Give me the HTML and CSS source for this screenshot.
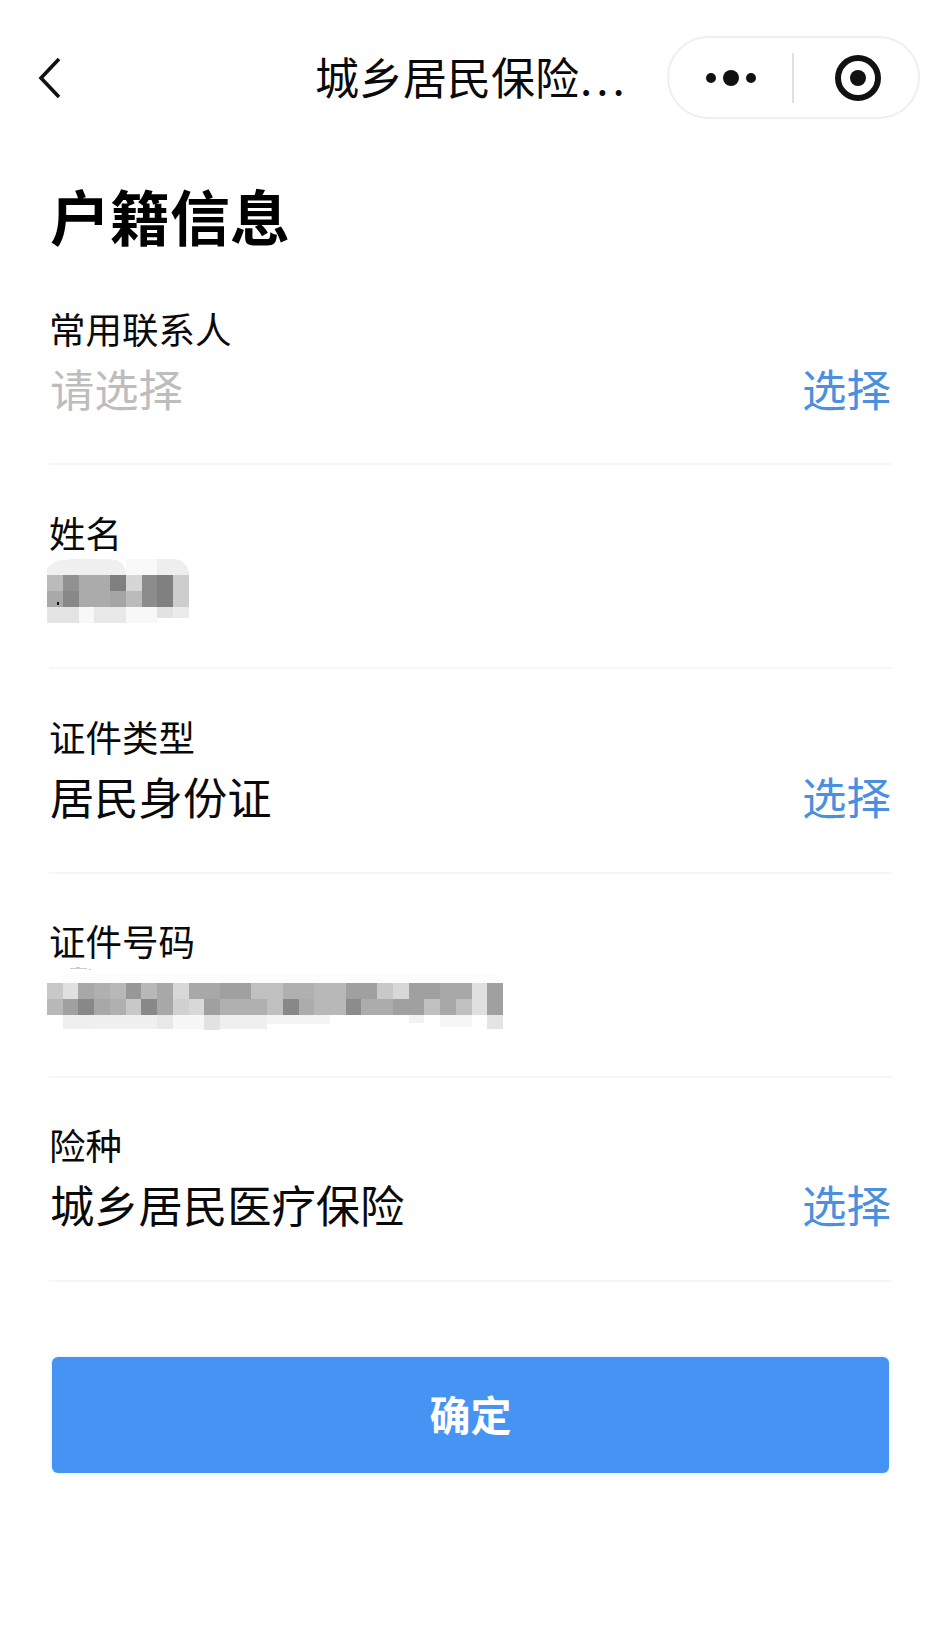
FILE: index.html
```html
<!DOCTYPE html>
<html lang="zh-CN">
<head>
<meta charset="utf-8">
<title>户籍信息</title>
<link rel="stylesheet" href="styles.css">
</head>
<body>
<div class="page">
  <header class="nav">
    <button class="back" aria-label="返回">
      <svg width="26" height="42" viewBox="0 0 26 42"><polyline points="22,2 4,21 22,40" fill="none" stroke="#111" stroke-width="3.6"/></svg>
    </button>
    <div class="nav-title">城乡居民保险<span class="ellipsis">...</span></div>
    <div class="capsule">
      <svg class="cap-dots" width="52" height="20" viewBox="0 0 52 20"><circle cx="6" cy="10" r="5" fill="#111"/><circle cx="26" cy="10" r="8" fill="#111"/><circle cx="46" cy="10" r="5" fill="#111"/></svg>
      <span class="cap-line"></span>
      <svg class="cap-target" width="48" height="48" viewBox="0 0 48 48"><circle cx="24" cy="24" r="20" fill="none" stroke="#111" stroke-width="6"/><circle cx="24" cy="24" r="8" fill="#111"/></svg>
    </div>
  </header>

  <h1 class="heading">户籍信息</h1>

  <section class="field">
    <div class="label">常用联系人</div>
    <div class="row"><span class="value placeholder">请选择</span><a class="pick">选择</a></div>
  </section>

  <section class="field">
    <div class="label">姓名</div>
    <div class="row mosaic-row">
      <svg class="mosaic" width="142" height="64" viewBox="0 0 9 4" shape-rendering="crispEdges">
        <path d="M0 1V.6Q.4 0 1.4 0H4Q5 0 5 1Z" fill="#f0f0f0"/>
        <rect x="5" y="0" width="2" height="1" fill="#f9f9f9"/>
        <path d="M7 0H8.2Q9 .2 9 1H7Z" fill="#eee"/>
        <rect x="0" y="1" width="1" height="1" fill="#bbb"/><rect x="1" y="1" width="1" height="1" fill="#919191"/><rect x="2" y="1" width="2" height="1" fill="#ababab"/><rect x="4" y="1" width="1" height="1" fill="#808080"/><rect x="5" y="1" width="1" height="1" fill="#d6d6d6"/><rect x="6" y="1" width="1" height="1" fill="#8c8c8c"/><rect x="7" y="1" width="1" height="1" fill="#808080"/><rect x="8" y="1" width="1" height="1" fill="#cdcdcd"/>
        <rect x="0" y="2" width="1" height="1" fill="#a9a9a9"/><rect x="1" y="2" width="1" height="1" fill="#888"/><rect x="2" y="2" width="2" height="1" fill="#ababab"/><rect x="4" y="2" width="1" height="1" fill="#a5a5a5"/><rect x="5" y="2" width="1" height="1" fill="#bbb"/><rect x="6" y="2" width="1" height="1" fill="#8c8c8c"/><rect x="7" y="2" width="1" height="1" fill="#808080"/><rect x="8" y="2" width="1" height="1" fill="#cdcdcd"/>
        <rect x="0" y="3" width="2" height="1" fill="#e4e4e4"/><rect x="2" y="3" width="1" height="1" fill="#f8f8f8"/><rect x="3" y="3" width="2" height="1" fill="#e8e8e8"/><rect x="5" y="3" width="2" height="1" fill="#f8f8f8"/><rect x="7" y="3" width="1" height=".7" fill="#e2e2e2"/><rect x="8" y="3" width="1" height=".7" fill="#ebebeb"/>
        <rect x=".62" y="2.72" width=".14" height=".14" fill="#111"/>
      </svg>
    </div>
  </section>

  <section class="field">
    <div class="label">证件类型</div>
    <div class="row"><span class="value">居民身份证</span><a class="pick">选择</a></div>
  </section>

  <section class="field">
    <div class="label">证件号码</div>
    <div class="row mosaic-row">
      <svg class="mosaic mosaic-id" width="456" height="64" viewBox="0 -1 29 4" shape-rendering="crispEdges">
        <rect x="1" y="-.6" width="28" height=".6" fill="#fdfdfd"/>
        <path d="M1.3 -.9Q2 -1.15 2.9 -.85Q2 -.98 1.3 -.9Z" fill="#ccc"/>
        <g class="m-row">
          <rect x="0" y="0" width="1" height="1" fill="#c8c8c8"/><rect x="1" y="0" width="1" height="1" fill="#e0e0e0"/><rect x="2" y="0" width="1" height="1" fill="#a8a8a8"/><rect x="3" y="0" width="1" height="1" fill="#b0b0b0"/><rect x="4" y="0" width="1" height="1" fill="#b8b8b8"/><rect x="5" y="0" width="1" height="1" fill="#989898"/><rect x="6" y="0" width="1" height="1" fill="#b8b8b8"/><rect x="7" y="0" width="1" height="1" fill="#a8a8a8"/><rect x="8" y="0" width="1" height="1" fill="#d8d8d8"/><rect x="9" y="0" width="2" height="1" fill="#a8a8a8"/><rect x="11" y="0" width="2" height="1" fill="#a0a0a0"/><rect x="13" y="0" width="2" height="1" fill="#c0c0c0"/><rect x="15" y="0" width="2" height="1" fill="#b0b0b0"/><rect x="17" y="0" width="2" height="1" fill="#b8b8b8"/><rect x="19" y="0" width="2" height="1" fill="#a0a0a0"/><rect x="21" y="0" width="1" height="1" fill="#c8c8c8"/><rect x="22" y="0" width="1" height="1" fill="#d8d8d8"/><rect x="23" y="0" width="2" height="1" fill="#a0a0a0"/><rect x="25" y="0" width="2" height="1" fill="#a8a8a8"/><rect x="27" y="0" width="1" height="1" fill="#e0e0e0"/><rect x="28" y="0" width="1" height="1" fill="#a0a0a0"/>
        </g>
        <g class="m-row">
          <rect x="0" y="1" width="1" height="1" fill="#b8b8b8"/><rect x="1" y="1" width="1" height="1" fill="#a0a0a0"/><rect x="2" y="1" width="1" height="1" fill="#888"/><rect x="3" y="1" width="1" height="1" fill="#a8a8a8"/><rect x="4" y="1" width="1" height="1" fill="#b0b0b0"/><rect x="5" y="1" width="1" height="1" fill="#c8c8c8"/><rect x="6" y="1" width="1" height="1" fill="#888"/><rect x="7" y="1" width="1" height="1" fill="#a8a8a8"/><rect x="8" y="1" width="1" height="1" fill="#d0d0d0"/><rect x="9" y="1" width="1" height="1" fill="#d8d8d8"/><rect x="10" y="1" width="1" height="1" fill="#a0a0a0"/><rect x="11" y="1" width="3" height="1" fill="#b0b0b0"/><rect x="14" y="1" width="1" height="1" fill="#c0c0c0"/><rect x="15" y="1" width="1" height="1" fill="#888"/><rect x="16" y="1" width="1" height="1" fill="#acacac"/><rect x="17" y="1" width="2" height="1" fill="#b8b8b8"/><rect x="19" y="1" width="1" height="1" fill="#8c8c8c"/><rect x="20" y="1" width="2" height="1" fill="#acacac"/><rect x="22" y="1" width="2" height="1" fill="#a0a0a0"/><rect x="24" y="1" width="1" height="1" fill="#c0c0c0"/><rect x="25" y="1" width="1" height="1" fill="#a8a8a8"/><rect x="26" y="1" width="1" height="1" fill="#c0c0c0"/><rect x="27" y="1" width="1" height="1" fill="#e0e0e0"/><rect x="28" y="1" width="1" height="1" fill="#a0a0a0"/>
        </g>
        <g class="m-row">
          <rect x="1" y="2" width="2" height=".9" fill="#efefef"/><rect x="3" y="2" width="4" height=".9" fill="#f0f0f0"/><rect x="7" y="2" width="1" height=".9" fill="#e8e8e8"/><rect x="8" y="2" width="2" height=".9" fill="#f7f7f7"/><rect x="10" y="2" width="1" height="1" fill="#e2e2e2"/><rect x="11" y="2" width="3" height=".9" fill="#efefef"/><rect x="14" y="2" width="4" height=".6" fill="#f4f4f4"/><rect x="23" y="2" width="1" height=".5" fill="#f2f2f2"/><rect x="25" y="2" width="2" height=".8" fill="#f6f6f6"/><rect x="28" y="2" width="1" height=".9" fill="#e4e4e4"/>
        </g>
      </svg>
    </div>
  </section>

  <section class="field">
    <div class="label">险种</div>
    <div class="row"><span class="value">城乡居民医疗保险</span><a class="pick">选择</a></div>
  </section>

  <div class="submit-wrap"><button class="submit">确定</button></div>
</div>
</body>
</html>
```

FILE: styles.css
```css
* { box-sizing: border-box; }
html, body { margin: 0; padding: 0; background: #fff; }
body {
  width: 944px;
  height: 1637px;
  overflow: hidden;
  font-family: "Noto Sans CJK SC", "Noto Sans", sans-serif;
  color: #0a0a0a;
}
.page { display: flex; flex-direction: column; }

.nav {
  display: grid;
  grid-template-columns: 1fr auto;
  align-items: center;
  position: relative;
  height: 83px;
  margin-top: 36px;
  padding: 0 24px 0 37px;
}
.back {
  width: 26px;
  height: 42px;
  margin-top: 1px;
  padding: 0;
  border: 0;
  background: none;
  display: block;
}
.back svg { display: block; }
.nav-title {
  position: absolute;
  left: 315px;
  top: 0;
  line-height: 80px;
  font-size: 44px;
  white-space: nowrap;
}
.ellipsis { letter-spacing: 4px; margin-left: 1px; }
.capsule {
  width: 253px;
  height: 83px;
  border: 2px solid #efefef;
  border-radius: 42px;
  display: flex;
  align-items: center;
  padding-left: 36px;
}
.cap-dots { display: block; }
.cap-line {
  width: 2px;
  height: 50px;
  background: #e0e0e0;
  margin-left: 35px;
}
.cap-target { display: block; margin-left: 40px; }

.heading {
  margin: 56px 0 6px;
  padding-left: 50px;
  font-size: 60px;
  line-height: 80px;
  font-weight: 700;
  color: #000;
}

.field {
  height: 204.2px;
  margin: 0 52px 0 49px;
  padding-top: 43.5px;
  border-bottom: 2px solid #f6f6f6;
}
.label {
  font-size: 36.5px;
  line-height: 48px;
}
.row {
  display: flex;
  justify-content: space-between;
  align-items: center;
  height: 70px;
  padding: 0 1px 0 1px;
}
.value { font-size: 44.3px; line-height: 70px; }
.placeholder { color: #bdbdbd; }
.pick { font-size: 44.5px; line-height: 70px; color: #4a8fe0; }
.mosaic-row { align-items: flex-start; position: relative; padding: 0; }
.mosaic { display: block; margin: 2px 0 0 -2px; }
.mosaic-id { margin-top: 1.5px; }

.submit-wrap { padding: 75.5px 55px 0 52px; }
.submit {
  display: block;
  width: 100%;
  height: 116px;
  padding: 0 0 4px;
  border: 0;
  border-radius: 6px;
  background: #4593f3;
  box-shadow: 0 0 3px #cfe3fb;
  color: #fff;
  font-family: inherit;
  font-size: 41px;
  font-weight: 700;
}
```
